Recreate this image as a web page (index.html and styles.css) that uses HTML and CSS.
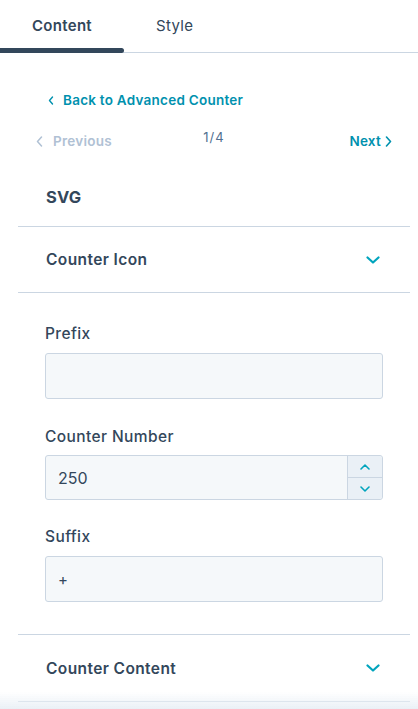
FILE: index.html
```html
<!DOCTYPE html>
<html lang="en">
<head>
<meta charset="utf-8">
<title>Advanced Counter - SVG</title>
<link rel="stylesheet" href="styles.css">
</head>
<body>
<div class="tabs">
  <div class="tab tab-active">Content</div>
  <div class="tab">Style</div>
</div>
<main class="panel">
  <a class="back" href="#">
    <svg class="chev-sm" width="6" height="9" viewBox="0 0 6 9"><path d="M4.5 1 L1.5 4.5 L4.5 8" fill="none" stroke="currentColor" stroke-width="1.4" stroke-linecap="round" stroke-linejoin="round"/></svg>
    <span>Back to Advanced Counter</span>
  </a>
  <div class="pager">
    <span class="pager-prev">
      <svg width="7" height="11" viewBox="0 0 7 11"><path d="M5.5 1 L1.5 5.5 L5.5 10" fill="none" stroke="currentColor" stroke-width="1.5" stroke-linecap="round" stroke-linejoin="round"/></svg>
      Previous
    </span>
    <span class="pager-count">1/4</span>
    <a class="pager-next" href="#">Next
      <svg width="7" height="11" viewBox="0 0 7 11"><path d="M1.5 1 L5.5 5.5 L1.5 10" fill="none" stroke="currentColor" stroke-width="1.6" stroke-linecap="round" stroke-linejoin="round"/></svg>
    </a>
  </div>
  <h2 class="title">SVG</h2>

  <section class="acc">
    <div class="acc-head">
      <span>Counter Icon</span>
      <svg class="chev" width="14" height="8" viewBox="0 0 14 8"><path d="M1.5 1.5 L7 6.5 L12.5 1.5" fill="none" stroke="currentColor" stroke-width="2.2" stroke-linecap="round" stroke-linejoin="round"/></svg>
    </div>
    <div class="acc-body">
      <div class="field">
        <label class="label">Prefix</label>
        <div class="input"></div>
      </div>
      <div class="field">
        <label class="label">Counter Number</label>
        <div class="input input-num">
          <span class="value">250</span>
          <div class="spin">
            <div class="spin-btn">
              <svg width="10" height="6" viewBox="0 0 10 6"><path d="M1 5 L5 1 L9 5" fill="none" stroke="currentColor" stroke-width="1.6" stroke-linecap="round" stroke-linejoin="round"/></svg>
            </div>
            <div class="spin-btn spin-down">
              <svg width="10" height="6" viewBox="0 0 10 6"><path d="M1 1 L5 5 L9 1" fill="none" stroke="currentColor" stroke-width="1.6" stroke-linecap="round" stroke-linejoin="round"/></svg>
            </div>
          </div>
        </div>
      </div>
      <div class="field field-suffix">
        <label class="label">Suffix</label>
        <div class="input"><span class="value value-plus">+</span></div>
      </div>
    </div>
  </section>

  <section class="acc acc-last">
    <div class="acc-head acc-head-last">
      <span>Counter Content</span>
      <svg class="chev" width="14" height="8" viewBox="0 0 14 8"><path d="M1.5 1.5 L7 6.5 L12.5 1.5" fill="none" stroke="currentColor" stroke-width="2.2" stroke-linecap="round" stroke-linejoin="round"/></svg>
    </div>
  </section>
</main>
<div class="fade"></div>
</body>
</html>
```

FILE: styles.css
```css
* { box-sizing: border-box; }

html, body {
  margin: 0;
  padding: 0;
  background: #ffffff;
  color: #33475b;
  font-family: "Inter", "Open Sans", "Liberation Sans", sans-serif;
  height: 709px;
  overflow: hidden;
}

.tabs {
  display: flex;
  height: 53px;
  border-bottom: 1px solid #cbd6e2;
  position: relative;
}

.tab {
  padding: 0 32px;
  display: flex;
  align-items: center;
  height: 50px;
  font-size: 15px;
  letter-spacing: 0.3px;
  color: #33475b;
  position: relative;
}

.tab-active {
  font-weight: 600;
}

.tab-active::after {
  content: "";
  position: absolute;
  left: 0;
  right: 0;
  bottom: -3px;
  height: 5px;
  border-radius: 0 3px 3px 0;
  background: #33475b;
}

.panel {
  margin: 0 8px 0 18px;
}

.back {
  display: flex;
  align-items: center;
  gap: 9px;
  margin-top: 37px;
  padding-left: 30px;
  height: 20px;
  color: #0091ae;
  font-size: 13.5px;
  letter-spacing: 0.25px;
  font-weight: 600;
  text-decoration: none;
}

.pager {
  display: grid;
  grid-template-columns: 1fr auto 1fr;
  align-items: start;
  margin-top: 21px;
  padding: 0 18px;
  height: 20px;
  font-size: 13.5px;
  letter-spacing: 0.25px;
  font-weight: 600;
}

.pager-prev {
  display: flex;
  align-items: center;
  gap: 10px;
  height: 20px;
  color: #b0c1d4;
}

.pager-count {
  font-weight: 400;
  font-size: 13px;
  letter-spacing: 1px;
  color: #516f90;
  line-height: 10px;
  margin-top: 1px;
}

.pager-next {
  display: flex;
  align-items: center;
  justify-content: flex-end;
  gap: 4px;
  height: 20px;
  color: #0091ae;
  text-decoration: none;
}

.title {
  margin: 36px 0 0;
  padding: 0 0 19px 28px;
  font-size: 16.5px;
  line-height: 20px;
  font-weight: 700;
  letter-spacing: 0.2px;
  color: #33475b;
}

.acc {
  border-top: 1px solid #cbd6e2;
}

.acc-head {
  height: 66px;
  display: flex;
  align-items: center;
  justify-content: space-between;
  padding: 0 30px 0 28px;
  font-size: 15.5px;
  letter-spacing: 0.4px;
  font-weight: 600;
  color: #33475b;
  border-bottom: 1px solid #cbd6e2;
}

.acc-head-last {
  height: 67px;
}

.chev {
  color: #00a4bd;
}

.acc-body {
  padding: 31px 27px 32px;
}

.field + .field {
  margin-top: 28px;
}

.field + .field-suffix {
  margin-top: 27px;
}

.label {
  display: block;
  font-size: 15.5px;
  letter-spacing: 0.4px;
  line-height: 20px;
  font-weight: 500;
  color: #33475b;
  margin-bottom: 9px;
}

.input {
  height: 46px;
  background: #f5f8fa;
  border: 1px solid #cbd6e2;
  border-radius: 3px;
  display: flex;
  align-items: center;
  padding-left: 12px;
}

.input-num {
  height: 45px;
  padding-right: 0;
  justify-content: space-between;
  margin-top: -1px;
}

.value {
  font-size: 16px;
  color: #33475b;
}

.value-plus {
  font-size: 15px;
}

.spin {
  width: 35px;
  height: 100%;
  border-left: 1px solid #cbd6e2;
  display: flex;
  flex-direction: column;
  background: #eaf0f6;
  border-radius: 0 3px 3px 0;
}

.spin-btn {
  flex: 1;
  display: flex;
  align-items: center;
  justify-content: center;
  color: #00a4bd;
}

.spin-down {
  border-top: 1px solid #cbd6e2;
}

.fade {
  position: fixed;
  left: 0;
  right: 0;
  bottom: 0;
  height: 17px;
  background: linear-gradient(to bottom, rgba(234, 240, 246, 0), #eaf0f6);
  pointer-events: none;
}
```
